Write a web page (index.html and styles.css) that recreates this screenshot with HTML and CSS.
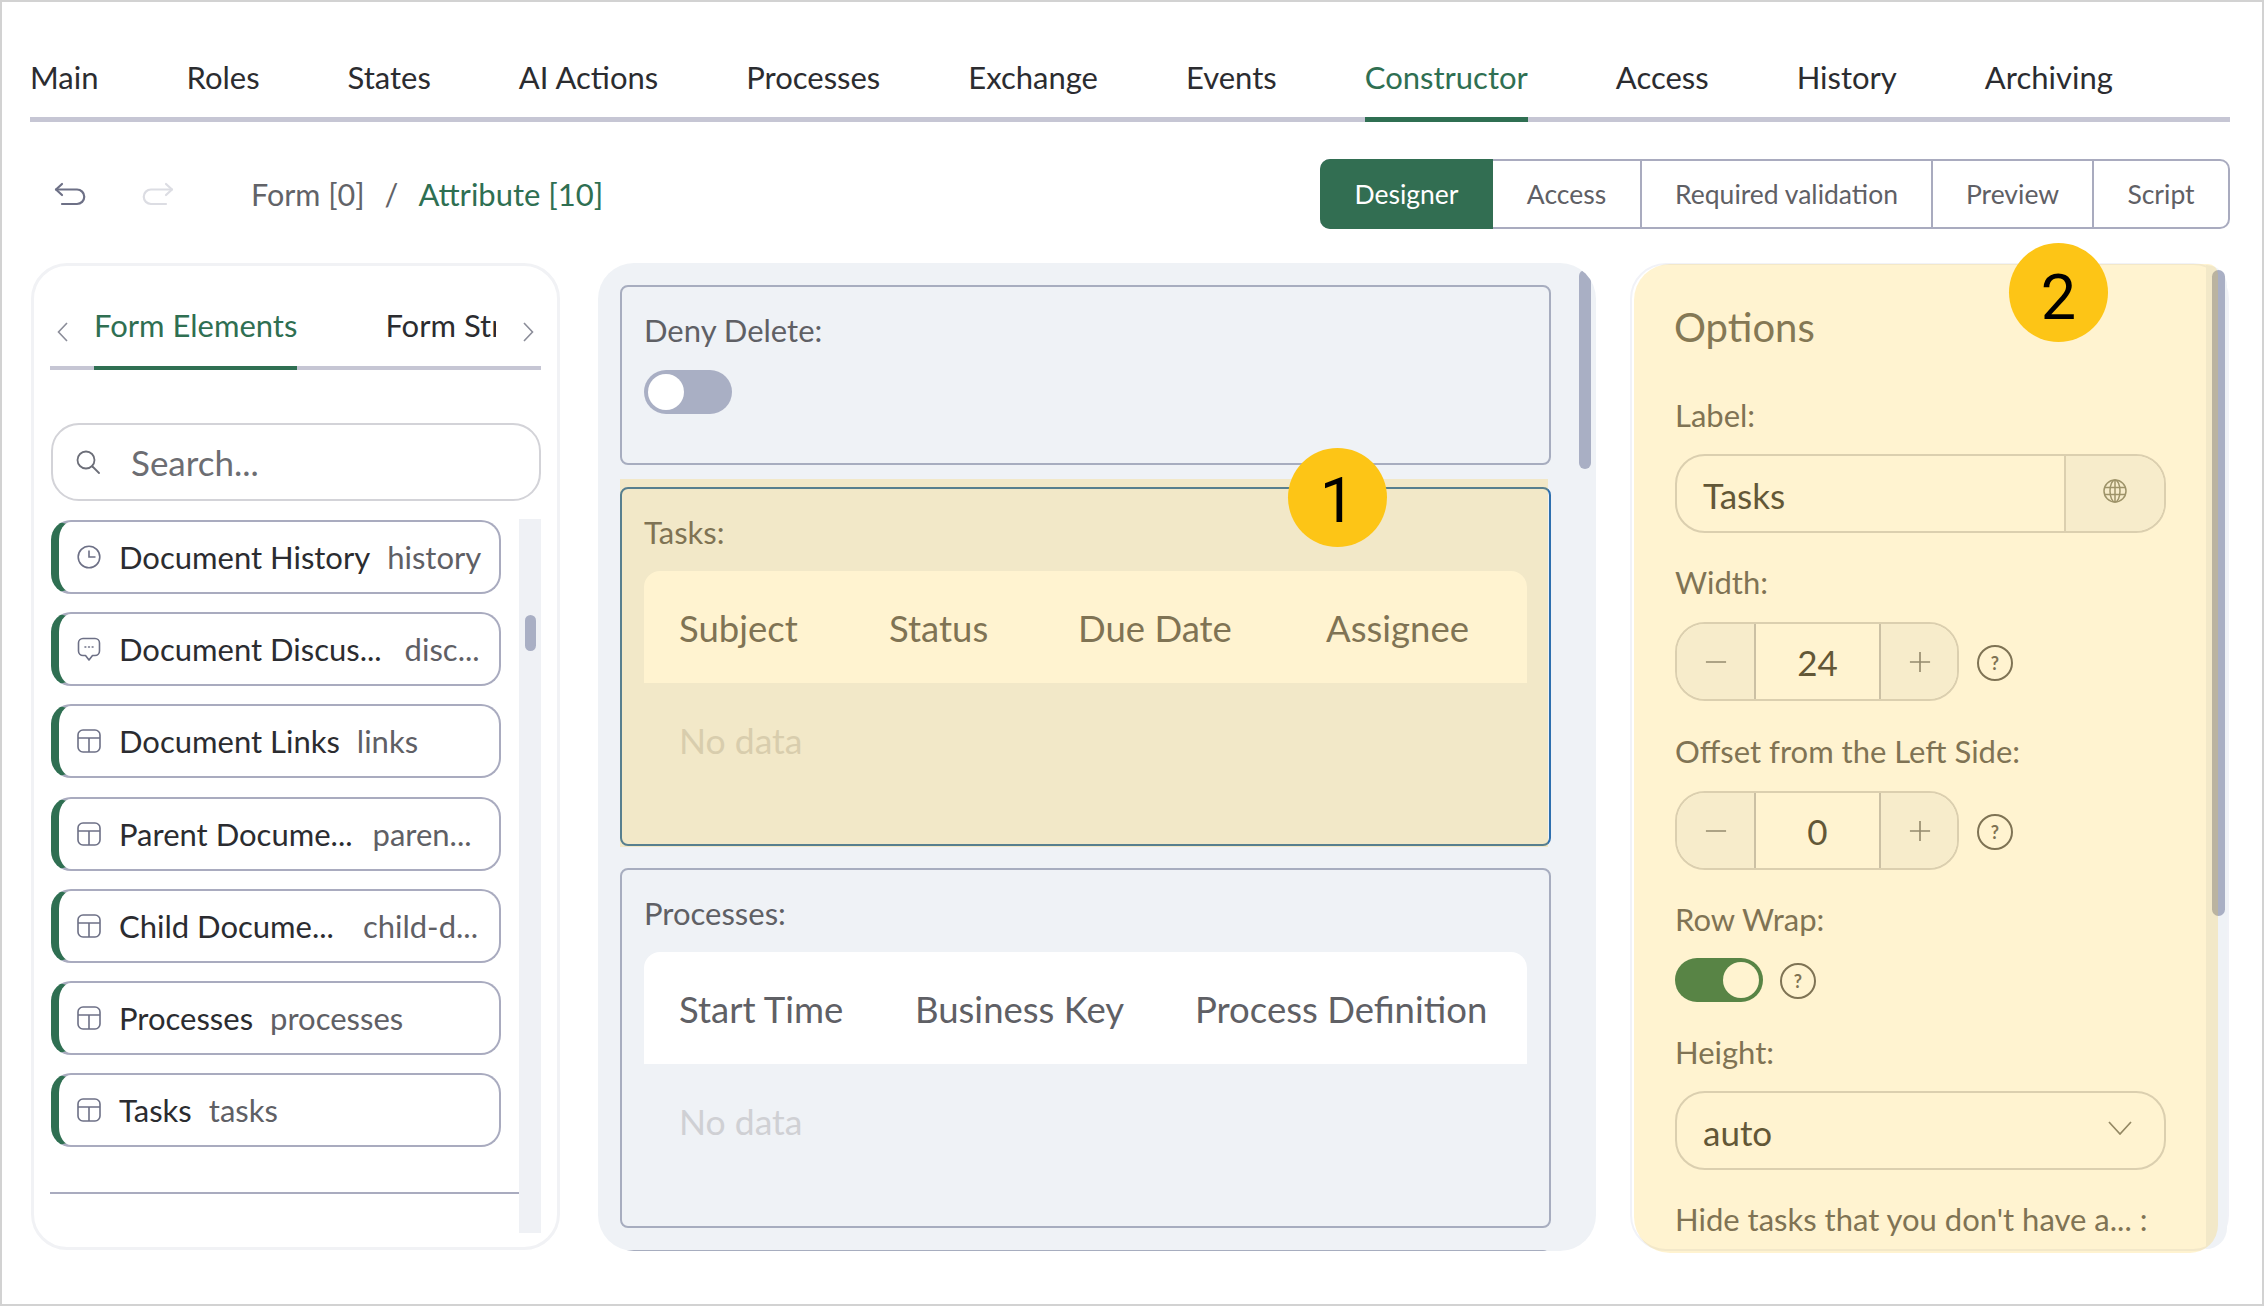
FILE: index.html
```html
<!DOCTYPE html>
<html lang="en">
<head>
<meta charset="utf-8">
<title>Constructor</title>
<link rel="stylesheet" href="styles.css">
</head>
<body>
<div class="frame">
  <nav class="main-tabs">
    <a class="main-tab">Main</a><a class="main-tab">Roles</a><a class="main-tab">States</a><a class="main-tab">AI Actions</a><a class="main-tab">Processes</a><a class="main-tab">Exchange</a><a class="main-tab">Events</a><a class="main-tab is-active">Constructor</a><a class="main-tab">Access</a><a class="main-tab">History</a><a class="main-tab">Archiving</a>
  </nav>

  <div class="toolbar">
    <svg class="tool-icon" viewBox="0 0 32 24" fill="none" stroke="#6d7086" stroke-width="2.2" stroke-linecap="round" stroke-linejoin="round"><path d="M8 2 2 7.500 8 13"/><path d="M2 7.500h21a7 7 0 0 1 0 14.500H8"/></svg>
    <svg class="tool-icon tool-icon--redo" viewBox="0 0 32 24" fill="none" stroke="#dcdde3" stroke-width="2.2" stroke-linecap="round" stroke-linejoin="round"><path d="M24 2l6 5.500L24 13"/><path d="M30 7.500H9a7 7 0 0 0 0 14.500h15"/></svg>
    <div class="crumbs"><span>Form [0]</span><span class="crumb-sep">/</span><span class="crumb-current">Attribute [10]</span></div>
    <div class="subtabs">
      <a class="subtab subtab--designer is-active">Designer</a><a class="subtab subtab--access">Access</a><a class="subtab subtab--required">Required validation</a><a class="subtab subtab--preview">Preview</a><a class="subtab subtab--script">Script</a>
    </div>
  </div>

  <div class="workspace">
    <aside class="palette">
      <div class="palette-tabs">
        <svg class="chev chev--left" viewBox="0 0 11 20" fill="none" stroke="#8b8d99" stroke-width="1.6"><path d="M10 1 1.500 10 10 19"/></svg>
        <div class="palette-tabs-scroll">
          <a class="palette-tab is-active">Form Elements</a><a class="palette-tab">Form Structure</a>
        </div>
        <svg class="chev chev--right" viewBox="0 0 11 20" fill="none" stroke="#8b8d99" stroke-width="1.6"><path d="M1 1l8.500 9L1 19"/></svg>
      </div>
      <div class="search">
        <svg class="search-icon" viewBox="0 0 24 24" fill="none" stroke="#6c6e78" stroke-width="1.8" stroke-linecap="round"><circle cx="10" cy="10" r="8.500"/><path d="M16.500 16.500 23 23"/></svg>
        <span class="search-text">Search...</span>
      </div>
      <div class="palette-body">
        <div class="palette-list">
          <div class="item">
            <svg class="item-icon" viewBox="0 0 24 24" fill="none" stroke="#6d7086" stroke-width="1.6"><circle cx="12" cy="12" r="10.800"/><path d="M12 5.500V12h6.500"/></svg>
            <span class="item-name">Document History</span><span class="item-key">history</span>
          </div>
          <div class="item item--discuss">
            <svg class="item-icon" viewBox="0 0 24 24" fill="none" stroke="#6d7086" stroke-width="1.6" stroke-linejoin="round"><path d="M6 1.500h12a4.500 4.500 0 0 1 4.500 4.500v8a4.500 4.500 0 0 1-4.500 4.500h-2.500L12 23l-3.500-4.500H6A4.500 4.500 0 0 1 1.500 14V6A4.500 4.500 0 0 1 6 1.500z"/><path d="M8 10h.8M11.600 10h.8M15.200 10h.8" stroke-linecap="round"/></svg>
            <span class="item-name">Document Discus...</span><span class="item-key">disc...</span>
          </div>
          <div class="item">
            <svg class="item-icon" viewBox="0 0 24 24" fill="none" stroke="#6d7086" stroke-width="1.6"><rect x="1" y="1" width="22" height="22" rx="5"/><path d="M1 9h22M12 9v14"/></svg>
            <span class="item-name">Document Links</span><span class="item-key">links</span>
          </div>
          <div class="item item--parent">
            <svg class="item-icon" viewBox="0 0 24 24" fill="none" stroke="#6d7086" stroke-width="1.6"><rect x="1" y="1" width="22" height="22" rx="5"/><path d="M1 9h22M12 9v14"/></svg>
            <span class="item-name">Parent Docume...</span><span class="item-key">paren...</span>
          </div>
          <div class="item item--child">
            <svg class="item-icon" viewBox="0 0 24 24" fill="none" stroke="#6d7086" stroke-width="1.6"><rect x="1" y="1" width="22" height="22" rx="5"/><path d="M1 9h22M12 9v14"/></svg>
            <span class="item-name">Child Docume...</span><span class="item-key">child-d...</span>
          </div>
          <div class="item">
            <svg class="item-icon" viewBox="0 0 24 24" fill="none" stroke="#6d7086" stroke-width="1.6"><rect x="1" y="1" width="22" height="22" rx="5"/><path d="M1 9h22M12 9v14"/></svg>
            <span class="item-name">Processes</span><span class="item-key">processes</span>
          </div>
          <div class="item">
            <svg class="item-icon" viewBox="0 0 24 24" fill="none" stroke="#6d7086" stroke-width="1.6"><rect x="1" y="1" width="22" height="22" rx="5"/><path d="M1 9h22M12 9v14"/></svg>
            <span class="item-name">Tasks</span><span class="item-key">tasks</span>
          </div>
          <div class="palette-sep"></div>
        </div>
        <div class="palette-track"><div class="palette-thumb"></div></div>
      </div>
    </aside>

    <main class="canvas">
      <section class="block block--deny">
        <div class="block-label">Deny Delete:</div>
        <div class="toggle toggle--off"><span class="knob"></span></div>
      </section>
      <section class="block block--tasks">
        <div class="block-label">Tasks:</div>
        <div class="thead thead--tasks"><span>Subject</span><span>Status</span><span>Due Date</span><span>Assignee</span></div>
        <div class="nodata">No data</div>
      </section>
      <section class="block block--processes">
        <div class="block-label">Processes:</div>
        <div class="thead thead--processes"><span>Start Time</span><span>Business Key</span><span>Process Definition</span></div>
        <div class="nodata">No data</div>
      </section>
      <section class="block block--next"></section>
      <div class="canvas-thumb"></div>
      <div class="highlight highlight--canvas"></div>
      <div class="badge badge--one">1</div>
    </main>

    <aside class="options">
      <div class="options-track"><div class="options-thumb"></div></div>
      <h2 class="options-title">Options</h2>
      <div class="field">
        <div class="field-label">Label:</div>
        <div class="input">
          <span class="input-value">Tasks</span>
          <span class="input-addon">
            <svg class="globe" viewBox="0 0 24 24" fill="none" stroke="#86887f" stroke-width="1.500"><circle cx="12" cy="12" r="11"/><ellipse cx="12" cy="12" rx="5" ry="11"/><path d="M2 8.500h20M2 15.500h20M12 1v22"/></svg>
          </span>
        </div>
      </div>
      <div class="field field--tight">
        <div class="field-label">Width:</div>
        <div class="field-row">
          <div class="stepper">
            <span class="step"><svg class="step-icon" viewBox="0 0 24 24" stroke="#7a7c84" stroke-width="1.800"><path d="M1 12h22"/></svg></span>
            <span class="step-value">24</span>
            <span class="step"><svg class="step-icon" viewBox="0 0 24 24" stroke="#7a7c84" stroke-width="1.800"><path d="M1 12h22M12 1v22"/></svg></span>
          </div>
          <span class="help">?</span>
        </div>
      </div>
      <div class="field">
        <div class="field-label">Offset from the Left Side:</div>
        <div class="field-row">
          <div class="stepper">
            <span class="step"><svg class="step-icon" viewBox="0 0 24 24" stroke="#7a7c84" stroke-width="1.800"><path d="M1 12h22"/></svg></span>
            <span class="step-value">0</span>
            <span class="step"><svg class="step-icon" viewBox="0 0 24 24" stroke="#7a7c84" stroke-width="1.800"><path d="M1 12h22M12 1v22"/></svg></span>
          </div>
          <span class="help">?</span>
        </div>
      </div>
      <div class="field field--tight">
        <div class="field-label">Row Wrap:</div>
        <div class="field-row field-row--toggle">
          <div class="toggle toggle--on"><span class="knob"></span></div>
          <span class="help">?</span>
        </div>
      </div>
      <div class="field">
        <div class="field-label">Height:</div>
        <div class="select">
          <span class="input-value">auto</span>
          <svg class="select-chev" viewBox="0 0 24 14" fill="none" stroke="#7a7a78" stroke-width="1.700"><path d="M1 1l11 12L23 1"/></svg>
        </div>
      </div>
      <div class="field field--tight">
        <div class="field-label">Hide tasks that you don't have a... :</div>
      </div>
      <div class="highlight highlight--options"></div>
      <div class="badge badge--two">2</div>
    </aside>
  </div>
</div>
</body>
</html>
```

FILE: styles.css
```css
* { box-sizing: border-box; }
html, body { margin: 0; padding: 0; background: #fff; }
body { font-family: "Lato", "Liberation Sans", sans-serif; color: #2b2c30; }

.frame {
  width: 2264px;
  height: 1306px;
  border: 2px solid #d2d2d2;
  padding: 0 32px 0 28px;
  background: #fff;
  overflow: hidden;
}

/* main tabs */
.main-tabs {
  display: flex;
  gap: 88px;
  height: 120px;
  align-items: flex-end;
  border-bottom: 5px solid #c6c6d4;
}
.main-tab {
  font-size: 31px;
  line-height: 40px;
  padding-bottom: 20px;
  border-bottom: 5px solid transparent;
  margin-bottom: -5px;
  color: #2b2c30;
}
.main-tab.is-active { color: #2f6f52; border-bottom-color: #2f6f52; }

/* toolbar */
.toolbar {
  display: flex;
  align-items: center;
  height: 70px;
  margin-top: 37px;
  margin-bottom: 34px;
  padding-left: 24px;
}
.tool-icon { width: 32px; height: 24px; flex: none; }
.tool-icon--redo { margin-left: 56px; }
.crumbs {
  display: flex;
  align-items: baseline;
  margin-left: 77px;
  font-size: 30.500px;
  color: #626368;
}
.crumb-sep { margin: 0 20px; }
.crumb-current { color: #2f6f52; font-size: 31px; }
.subtabs {
  display: flex;
  height: 70px;
  margin-left: auto;
  border: 2px solid #a9abbf;
  border-radius: 10px;
}
.subtab {
  display: flex;
  align-items: center;
  justify-content: center;
  font-size: 26.500px;
  color: #5f6065;
  border-left: 2px solid #a9abbf;
}
.subtab--designer { width: 173px; margin: -2px 0 -2px -2px; border: 0; border-radius: 10px 0 0 10px; background: #326e52; color: #fff; }
.subtab--access { width: 147px; border-left: 0; }
.subtab--required { width: 291px; }
.subtab--preview { width: 161px; }
.subtab--script { width: 136px; }

/* workspace */
.workspace {
  position: relative;
  display: flex;
  margin-left: 1px;
  height: 990px;
}

/* left palette */
.palette {
  flex: none;
  width: 529px;
  height: 987px;
  border: 3px solid #f1f2f5;
  border-radius: 36px;
  padding: 0 16px;
}
.palette-tabs {
  display: flex;
  align-items: flex-start;
  height: 104px;
  border-bottom: 4px solid #c6c6d4;
}
.chev { width: 11px; height: 20px; flex: none; margin-top: 56px; }
.chev--left { margin-left: 7px; }
.chev--right { margin-left: 27px; }
.palette-tabs-scroll {
  display: flex;
  gap: 88px;
  flex: none;
  width: 402px;
  height: 104px;
  margin-left: 26px;
  overflow: hidden;
}
.palette-tab {
  position: relative;
  flex: none;
  height: 104px;
  padding-top: 41px;
  font-size: 31px;
  line-height: 36px;
  color: #2b2c30;
}
.palette-tab.is-active { color: #2f6f52; }
.palette-tab.is-active::after {
  content: "";
  position: absolute;
  left: 0;
  right: 0;
  bottom: 0;
  height: 4px;
  background: #2f6f52;
}

.search {
  display: flex;
  align-items: center;
  width: 490px;
  height: 78px;
  margin: 53px 0 0 1px;
  border: 2px solid #d3d3d8;
  border-radius: 28px;
  padding-left: 23px;
}
.search-icon { width: 24px; height: 24px; flex: none; }
.search-text { margin-left: 31px; font-size: 35px; color: #6c6d72; }

.palette-body {
  display: flex;
  height: 714px;
  margin-top: 18px;
}
.palette-list {
  width: 469px;
  flex: none;
  padding-top: 1px;
}
.item {
  display: flex;
  align-items: center;
  width: 450px;
  height: 74px;
  margin: 0 0 18.200px 1px;
  border: 2px solid #a9abbf;
  border-left: 8px solid #2f6f52;
  border-radius: 20px;
  padding-left: 18px;
  white-space: nowrap;
}
.item-icon { width: 24px; height: 24px; flex: none; }
.item-name { margin-left: 18px; font-size: 31px; color: #2b2c30; }
.item-key { margin-left: 17px; font-size: 31px; color: #5f6065; }
.item--discuss .item-key { margin-left: 23px; }
.item--parent .item-key { margin-left: 20px; }
.item--child .item-key { margin-left: 29px; }
.palette-sep {
  height: 2px;
  margin-top: 45px;
  background: #a9abbf;
}
.palette-track {
  position: relative;
  width: 22px;
  background: #eff1f5;
}
.palette-thumb {
  position: absolute;
  left: 6px;
  top: 96px;
  width: 11px;
  height: 36px;
  border-radius: 6px;
  background: #a9afc4;
}

/* canvas */
.canvas {
  position: relative;
  flex: none;
  width: 998px;
  height: 988px;
  margin-left: 38px;
  padding: 22px 0 0 22px;
  border-radius: 36px;
  background: #eff2f6;
  overflow: hidden;
}
.block {
  width: 931px;
  border: 2px solid #a7adbf;
  border-radius: 8px;
  padding: 25px 22px 0;
  margin-bottom: 22px;
}
.block--deny { height: 180px; }
.block--tasks { height: 359px; border-color: #2e6fae; }
.block--processes { height: 360px; }
.block--next { height: 40px; }
.block-label {
  font-size: 31px;
  line-height: 36px;
  color: #5f6065;
}
.toggle {
  display: flex;
  align-items: center;
  width: 88px;
  height: 44px;
  border-radius: 22px;
  padding: 0 4px;
}
.toggle--off { background: #a9afc4; margin-top: 22px; }
.toggle--on { background: #2f7552; justify-content: flex-end; }
.knob {
  width: 36px;
  height: 36px;
  border-radius: 50%;
  background: #fff;
}
.thead {
  display: grid;
  align-items: center;
  height: 112px;
  margin-top: 21px;
  padding: 2px 0 0 35px;
  background: #fff;
  border-radius: 16px 16px 0 0;
  font-size: 36.500px;
  color: #5f6065;
  white-space: nowrap;
}
.thead--tasks { grid-template-columns: 210px 189px 248px auto; }
.thead--processes { grid-template-columns: 236px 280px auto; }
.nodata {
  padding: 35px 0 0 35px;
  font-size: 35.500px;
  line-height: 46px;
  color: #cfd0d4;
}
.canvas-thumb {
  position: absolute;
  left: 981px;
  top: 7px;
  width: 12px;
  height: 199px;
  border-radius: 6px;
  background: #a9afc4;
}
.highlight {
  position: absolute;
  background: rgba(253, 197, 22, 0.2);
  pointer-events: none;
}
.highlight--canvas { left: 22px; top: 216px; width: 928px; height: 368px; }
.highlight--options { left: 2px; top: -1px; width: 584px; height: 989px; border-radius: 36px 10px 28px 36px; }
.badge {
  position: absolute;
  width: 99px;
  height: 99px;
  border-radius: 50%;
  background: #fdc516;
  display: flex;
  align-items: center;
  justify-content: center;
  font-family: "Roboto", "Liberation Sans", sans-serif;
  font-size: 63px;
  color: #000;
}
.badge--one { left: 690px; top: 185px; padding-top: 6px; }
.badge--two { left: 377px; top: -22px; padding-top: 9px; }

/* options */
.options {
  position: relative;
  flex: none;
  width: 599px;
  height: 988px;
  margin-left: 34px;
  border: 2px solid #f1f2f7;
  border-radius: 36px;
  padding: 38px 0 0 43px;
}
.options-track {
  position: absolute;
  right: 0;
  top: 0;
  width: 21px;
  height: 984px;
  background: #eff2f6;
  border-radius: 0 34px 34px 0;
}
.options-thumb {
  position: absolute;
  left: 6px;
  top: 5px;
  width: 13px;
  height: 646px;
  border-radius: 7px;
  background: #a9afc4;
}
.options-title {
  margin: 0 0 0 -1px;
  font-size: 40px;
  line-height: 48px;
  font-weight: 400;
  color: #666;
}
.field { margin-top: 32px; }
.field--tight { margin-top: 31px; }
.options-title + .field { margin-top: 46px; }
.field-label {
  font-size: 31px;
  line-height: 36px;
  color: #5f6065;
  white-space: nowrap;
}
.input, .select {
  position: relative;
  display: flex;
  align-items: center;
  width: 491px;
  height: 79px;
  margin-top: 21px;
  border: 2px solid #d2d2d6;
  border-radius: 30px;
  padding-left: 26px;
}
.input-value { font-size: 35px; color: #3b3c40; flex: 1; padding-top: 2px; }
.input-addon {
  display: flex;
  align-items: center;
  justify-content: center;
  flex: none;
  width: 100px;
  height: 75px;
  border-left: 2px solid #d2d2d6;
  border-radius: 0 28px 28px 0;
  background: #f6f7f9;
  padding-bottom: 6px;
}
.globe { width: 24px; height: 24px; }
.select-chev { width: 24px; height: 14px; margin-right: 32px; margin-bottom: 6px; flex: none; }
.field-row {
  display: flex;
  align-items: center;
  gap: 18px;
  margin-top: 22px;
}
.field-row--toggle { margin-top: 21px; gap: 17px; }
.stepper {
  display: flex;
  width: 284px;
  height: 79px;
  border: 2px solid #d2d2d6;
  border-radius: 30px;
  overflow: hidden;
}
.step {
  flex: none;
  display: flex;
  align-items: center;
  justify-content: center;
  width: 77px;
  background: #f6f7f9;
}
.step + .step-value + .step { width: 78px; }
.step-icon { width: 22px; height: 22px; fill: none; }
.step-value {
  flex: none;
  width: 127px;
  text-align: center;
  font-size: 35px;
  line-height: 76px;
  color: #3b3c40;
  border-left: 2px solid #bfc0c8;
  border-right: 2px solid #bfc0c8;
}
.help {
  flex: none;
  width: 36px;
  height: 36px;
  margin-top: 2px;
  border: 2px solid #5f6065;
  border-radius: 50%;
  display: flex;
  align-items: center;
  justify-content: center;
  font-size: 18px;
  font-weight: 700;
  color: #5f6065;
}
```
